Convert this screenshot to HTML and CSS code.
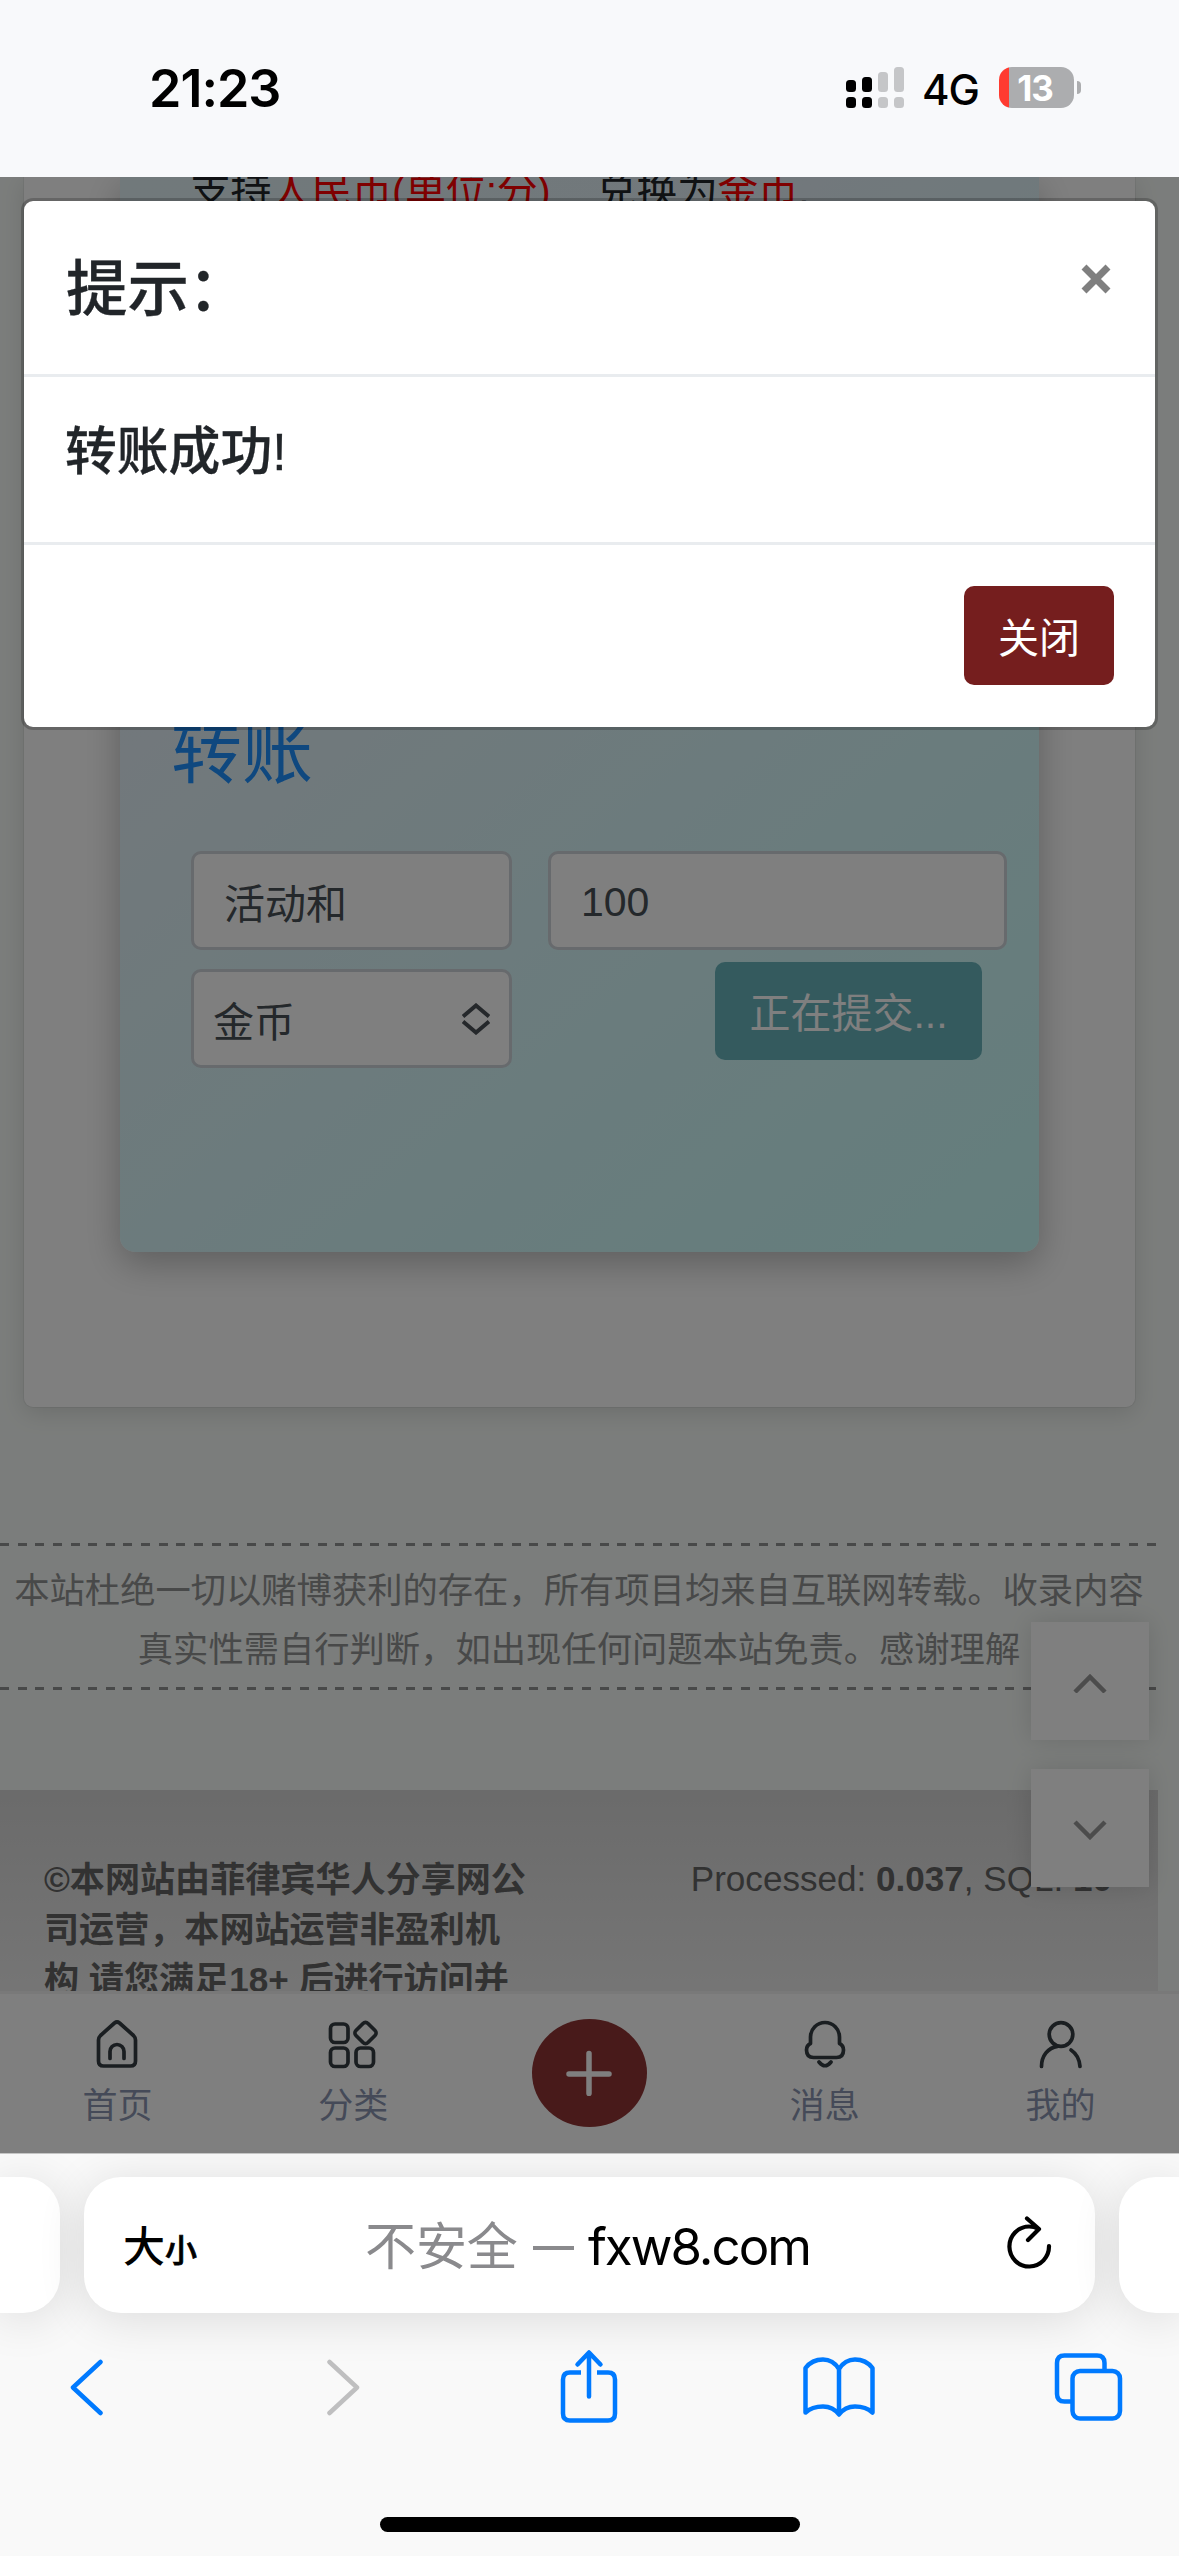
FILE: index.html
```html
<!DOCTYPE html>
<html lang="zh-CN">
<head>
<meta charset="utf-8">
<title>转账</title>
<link rel="stylesheet" href="styles.css">
</head>
<body>
<div class="phone">
  <header class="status">
    <span class="clock">21:23</span>
    <div class="indicators">
      <svg class="signal" width="58" height="41" viewBox="0 0 58 41">
        <g fill="#000"><rect x="0" y="13" width="10" height="12" rx="3.5"/><rect x="16" y="10" width="10" height="15" rx="3.5"/><rect x="0" y="30" width="10" height="11" rx="3.5"/><rect x="16" y="30" width="10" height="11" rx="3.5"/></g>
        <g fill="#c5c6c8"><rect x="32" y="5" width="10" height="20" rx="3.5"/><rect x="48" y="0" width="10" height="25" rx="3.5"/><rect x="32" y="30" width="10" height="11" rx="3.5"/><rect x="48" y="30" width="10" height="11" rx="3.5"/></g>
      </svg>
      <span class="network">4G</span>
      <div class="battery"><span class="level">13</span></div>
      <i class="battery-tip"></i>
    </div>
  </header>

  <main class="viewport">
    <div class="page">
      <section class="card">
        <div class="panel">
          <p class="hint">支持<em>人民币(单位:分)</em><span class="gap"></span>兑换为<em>金币</em>.</p>
          <h2 class="panel-title">转账</h2>
          <form class="form">
            <div class="field">活动和</div>
            <div class="field amount">100</div>
            <div class="field select">金币
              <svg width="28" height="32" viewBox="0 0 28 32" fill="none" stroke="#4a5056" stroke-width="4"><path d="M1 13.500 14 2.500 27 13.500M1 18.500 14 29.500 27 18.500"/></svg>
            </div>
            <div class="submit">正在提交...</div>
          </form>
        </div>
      </section>
      <div class="notice">本站杜绝一切以赌博获利的存在，所有项目均来自互联网转载。收录内容<br>真实性需自行判断，如出现任何问题本站免责。感谢理解</div>
      <footer class="footer">
        <div class="copyright">©本网站由菲律宾华人分享网公<br>司运营，本网站运营非盈利机<br>构 请您满足18+ 后进行访问并</div>
        <div class="stats">Processed: <b>0.037</b>, SQL: <b>10</b></div>
      </footer>
    </div>
    <div class="scrollers">
      <div class="scroller"><svg width="34" height="22" viewBox="0 0 34 22"><path d="M2 21 17 6 32 21"/></svg></div>
      <div class="scroller"><svg width="34" height="22" viewBox="0 0 34 22"><path d="M2 4 17 19 32 4"/></svg></div>
    </div>
    <nav class="tabbar">
      <div class="tab"><svg width="50" height="50" viewBox="0 0 50 50"><path d="M6.500 21Q6.500 18.500 8.500 16.500L22.500 4Q25 2 27.500 4L41.500 16.500Q43.500 18.500 43.500 21V42Q43.500 47 38.500 47H11.500Q6.500 47 6.500 42ZM18 39.500V32.500a7 7 0 0 1 14 0V39.500"/></svg><span>首页</span></div>
      <div class="tab"><svg width="50" height="50" viewBox="0 0 50 50"><rect x="2.500" y="5" width="17.500" height="18.500" rx="4.500"/><rect x="2.500" y="29" width="17.500" height="18.500" rx="4.500"/><rect x="28" y="29" width="17.500" height="18.500" rx="4.500"/><rect x="29" y="5.500" width="17" height="17" rx="3.500" transform="rotate(45 37.500 14)"/></svg><span>分类</span></div>
      <div class="add"><svg width="46" height="46" viewBox="0 0 46 46"><path d="M23 3.500V43.500M3 24H43"/></svg></div>
      <div class="tab"><svg width="50" height="50" viewBox="0 0 50 50"><path d="M10.500 24.500V18a14.500 14.500 0 0 1 29 0V24.500Q43.500 26.500 43.500 31Q43.500 38.500 36.500 38.500H13.500Q6.500 38.500 6.500 31Q6.500 26.500 10.500 24.500ZM19 43Q25 50.500 31 43"/></svg><span>消息</span></div>
      <div class="tab"><svg width="50" height="50" viewBox="0 0 50 50"><circle cx="25" cy="15.500" r="11.800"/><path d="M5.500 47.500C5.500 37 12 28.500 21.500 27.300M35 31C41 35 43.500 41 44 47.500"/></svg><span>我的</span></div>
    </nav>
    <div class="backdrop"></div>
    <div class="modal">
      <div class="modal-head"><h5>提示<span>：</span></h5><svg width="30" height="30" viewBox="0 0 30 30"><path d="M3 3 27 27M27 3 3 27"/></svg></div>
      <div class="modal-body">转账成功!</div>
      <div class="modal-foot"><button class="close">关闭</button></div>
    </div>
  </main>

  <footer class="safari">
    <div class="tabs">
      <div class="side"></div>
      <div class="address">
        <span class="size">大<small>小</small></span>
        <span class="url"><i>不安全 <b></b></i> fxw8.com</span>
        <svg width="46" height="56" viewBox="0 0 46 56" fill="none" stroke="#000" stroke-width="4.200" stroke-linecap="round" stroke-linejoin="round"><path d="M43 30A19.800 20 0 1 1 23 10.500Q28 10.500 32.500 13M21 2.500 33 13 22 24"/></svg>
      </div>
      <div class="side"></div>
    </div>
    <div class="toolbar">
      <svg width="40" height="60" viewBox="0 0 40 60"><path d="M33.500 6 6 31.500 33.500 57"/></svg>
      <svg class="forward" width="40" height="60" viewBox="0 0 40 60"><path d="M6.500 6 34 31.500 6.500 57"/></svg>
      <svg class="share" width="60" height="76" viewBox="0 0 60 76"><path class="box" d="M22 24.500H11Q4 24.500 4 31.500V65.500Q4 72.500 11 72.500H49Q56 72.500 56 65.500V31.500Q56 24.500 49 24.500H38"/><path d="M30 48.500V5M18.500 16.500 30 4.500 41.500 16.500"/></svg>
      <svg class="book" width="76" height="64" viewBox="0 0 76 64"><path d="M38 15Q32 5.500 22 5.500Q11 5.500 4.500 14V58.500Q11 52.500 22 52.500Q32 52.500 38 60.500Q44 52.500 54 52.500Q65 52.500 71.500 58.500V14Q65 5.500 54 5.500Q44 5.500 38 15V60"/></svg>
      <svg class="windows" width="70" height="70" viewBox="0 0 70 70"><path d="M18 50.500H11.500Q4 50.500 4 43V12Q4 4.500 11.500 4.500H44Q51.500 4.500 51.500 12V18.500"/><rect x="19.500" y="20" width="47.500" height="47.500" rx="7.500"/></svg>
    </div>
    <div class="home"></div>
  </footer>
</div>
</body>
</html>
```
FILE: styles.css
```css
* { box-sizing: border-box; }
body { margin: 0; font-family: "Liberation Sans", "Noto Sans CJK SC", sans-serif; color: #212529; }
.phone { width: 1179px; height: 2556px; display: flex; flex-direction: column; overflow: hidden; background: #f8f8f9; }
svg { display: block; flex: none; }

.status { height: 177px; flex: none; background: #f8f9fb; display: flex; justify-content: space-between; align-items: center; padding: 0 98px 1px 149px; font-family: Inter, sans-serif; color: #000; }
.clock { font-size: 52px; font-weight: 600; letter-spacing: -1px; padding-top: 1px; }
.indicators { display: flex; align-items: center; padding-bottom: 1px; }
.network { font-size: 42px; font-weight: 500; margin: 0 22px 0 18px; line-height: 41px; width: 55px; letter-spacing: -1px; padding-top: 3px; }
.battery { width: 75px; height: 41px; border-radius: 13px; background: linear-gradient(90deg, #ff3b30 10px, #acadaf 10px); display: flex; align-items: center; justify-content: center; padding-right: 3px; }
.level { color: #fff; font-size: 35px; font-weight: 700; letter-spacing: -1px; }
.battery-tip { width: 4px; height: 13px; margin-left: 3px; background: #acadaf; border-radius: 0 5px 5px 0; }

.viewport { position: relative; height: 1976px; flex: none; overflow: hidden; background: #f7fbf8; }
.page { width: 1158px; display: flex; flex-direction: column; }
.card { width: 1111px; height: 1230px; margin-left: 24px; padding-left: 96px; background: #fff; border-radius: 0 0 9px 9px; box-shadow: 0 0 0 1px rgba(0,0,0,.05), 0 6px 24px rgba(0,0,0,.13); }
.panel { width: 919px; height: 1075px; border-radius: 0 0 15px 15px; background: linear-gradient(140deg, #e2f2f6 0%, #e4f1f8 32%, #d8f7fa 60%, #c8fdfa 100%); box-shadow: 0 12px 36px rgba(0,0,0,.26); padding: 0 33px; overflow: hidden; }
.hint { margin: -16px 0 0; padding-left: 37px; height: 50px; line-height: 60px; font-size: 41px; letter-spacing: -.6px; white-space: pre; }
.hint em { color: #f00; font-style: normal; }
.gap { display: inline-block; width: 46px; }
.panel-title { margin: 492px 0 0; padding-left: 18px; font-size: 71px; line-height: 100px; font-weight: 400; color: #1e90ff; }
.form { margin: 48px 0 0 38px; display: grid; grid-template-columns: 321px 459px; column-gap: 36px; row-gap: 19px; }
.field { height: 99px; border: 3px solid #ced4da; border-radius: 10px; background: #fff; padding: 0 33px 0 30px; display: flex; align-items: center; font-size: 41px; color: #495057; }
.amount { padding: 4px 30px 0; }
.select { padding: 0 19px; justify-content: space-between; }
.submit { width: 267px; height: 98px; margin: -7px 0 0 167px; padding-bottom: 3px; border-radius: 10px; background: #68b4bc; color: #fff; font-size: 41px; display: flex; align-items: center; justify-content: center; }
.notice { margin-top: 136px; height: 147px; padding-top: 18px; text-align: center; font-size: 35.300px; line-height: 59px; color: #919292; white-space: nowrap; background: repeating-linear-gradient(90deg, #919292 0 9px, transparent 9px 17.640px) 0 0 / 100% 3px no-repeat, repeating-linear-gradient(90deg, #919292 0 9px, transparent 9px 17.640px) 0 100% / 100% 3px no-repeat; }
.footer { margin-top: 100px; height: 201px; padding: 65px 45px 0 44px; background: linear-gradient(#d6d6d6, #ebebeb); display: flex; justify-content: space-between; font-size: 35.100px; line-height: 50px; color: #646464; white-space: nowrap; }
.copyright { font-weight: 700; }
.stats { padding-right: 1px; margin-top: -1px; }

.scrollers { position: absolute; left: 1031px; top: 1445px; display: flex; flex-direction: column; gap: 29px; }
.scroller { width: 118px; height: 118px; padding-top: 2px; background: #fff; box-shadow: 0 0 24px rgba(0,0,0,.13); display: flex; align-items: center; justify-content: center; }
.scroller path { fill: none; stroke: #999; stroke-width: 4.500px; }

.tabbar { position: absolute; left: 0; right: 0; bottom: 0; height: 162px; background: #fff; border-top: 3px solid #f3f3f3; display: grid; grid-template-columns: repeat(5, 1fr); justify-items: center; }
.tab { display: flex; flex-direction: column; align-items: center; padding: 25px 1px 0 0; font-size: 35px; line-height: 50px; color: #8a94b0; gap: 12px; }
.tab svg { fill: none; stroke: #353d42; stroke-width: 3.700px; stroke-linecap: round; stroke-linejoin: round; }
.add { width: 115px; height: 108px; margin-top: 25px; border-radius: 50%; background: #903434; display: flex; align-items: center; justify-content: center; }
.add path { fill: none; stroke: #fff; stroke-width: 5.500px; stroke-linecap: round; }

.backdrop { position: absolute; inset: 0; background: rgba(0,0,0,.5); }
.modal { position: absolute; left: 21px; top: 21px; width: 1137px; height: 532px; border: 3px solid rgba(0,0,0,.2); background: #fff; background-clip: padding-box; border-radius: 12px; display: flex; flex-direction: column; }
.modal-head { height: 176px; border-bottom: 3px solid #e9ecef; padding: 44px 44px 0 42px; display: flex; justify-content: space-between; }
.modal-head h5 { margin: 0; font-size: 61.500px; line-height: 90px; font-weight: 500; -webkit-text-stroke: .3px #212529; }
.modal-head h5 span { margin-left: -1px; }
.modal-head svg { margin-top: 19px; }
.modal-head path { stroke: #7f7f7f; stroke-width: 7px; }
.modal-body { height: 168px; border-bottom: 3px solid #e9ecef; padding: 37px 41px; font-size: 51.800px; line-height: 76px; font-weight: 500; -webkit-text-stroke: .3px #212529; }
.modal-foot { display: flex; justify-content: flex-end; padding: 41px 41px 0; }
.close { width: 150px; height: 99px; border: 0; border-radius: 10px; background: #751e1e; color: #fff; font: 41px "Liberation Sans", "Noto Sans CJK SC", sans-serif; padding: 0 0 2px; }

.safari { flex: 1; border-top: 1px solid #c5c5c5; padding-top: 23px; display: flex; flex-direction: column; background: #f9f9f9; overflow: hidden; }
.tabs { height: 136px; flex: none; display: grid; grid-template-columns: 60px 1011px 60px; column-gap: 24px; }
.side, .address { background: #fff; border-radius: 37px; box-shadow: 0 6px 48px rgba(0,0,0,.12); }
.side:first-child { border-radius: 0 37px 37px 0; }
.side:last-child { border-radius: 37px 0 0 37px; }
.address { display: grid; grid-template-columns: 90px 1fr 90px; align-items: center; padding: 0 43px 4px 39px; color: #000; font-family: Inter, "Noto Sans CJK SC", sans-serif; }
.address svg { justify-self: end; margin-top: 2px; }
.size { font-size: 42px; font-weight: 500; white-space: nowrap; }
.size small { font-size: 32px; -webkit-text-stroke: .7px #000; }
.url { text-align: center; font-size: 51px; letter-spacing: -2px; white-space: nowrap; }
.url i { font-style: normal; color: #8a8a8d; letter-spacing: -.2px; }
.url b { display: inline-block; width: 41px; height: 4px; margin: 0 2px 0 1px; background: #8a8a8d; vertical-align: 15px; }
.toolbar { height: 76px; margin-top: 35px; padding-left: 67px; display: flex; align-items: center; }
.toolbar svg { fill: none; stroke: #007aff; stroke-width: 4.500px; stroke-linecap: round; stroke-linejoin: round; }
.toolbar .forward { stroke: #bfbfc0; margin-left: 216px; }
.toolbar .share { margin-left: 196px; }
.share .box { stroke-linecap: butt; }
.toolbar .book { margin-left: 182px; }
.toolbar .windows { margin-left: 176px; }
.home { width: 420px; height: 15px; margin: 93px auto 0; border-radius: 8px; background: #000; }
```
